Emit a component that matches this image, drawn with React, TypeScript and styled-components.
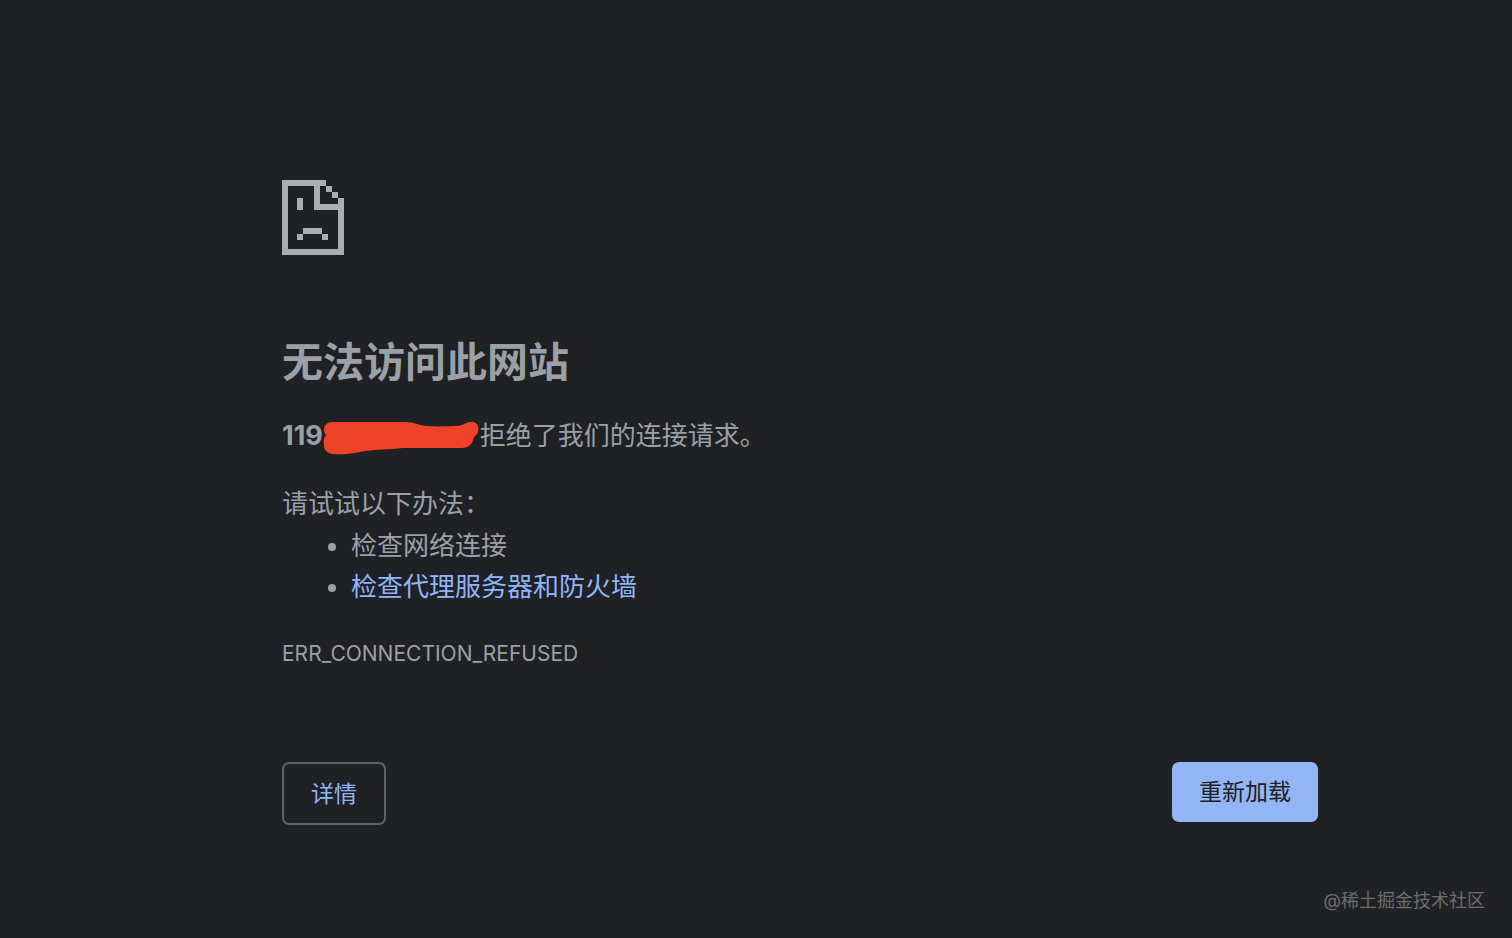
import React from "react";
import styled, { createGlobalStyle } from "styled-components";

const GlobalStyle = createGlobalStyle`
  *, *::before, *::after {
    box-sizing: border-box;
  }
  body {
    margin: 0;
    background: #202124;
    color: #9aa0a6;
    font-family: Inter, "Noto Sans CJK SC", sans-serif;
    font-size: 26px;
    line-height: 42px;
  }
`;

const Page = styled.div`
  display: flex;
  flex-direction: column;
  min-height: 100vh;
`;

const Main = styled.main`
  padding: 180px 194px 0 282px;
`;

const ErrorIcon = styled.svg`
  display: block;
  width: 62px;
  height: 75px;
  fill: #acadae;
`;

const Title = styled.h1`
  margin: 80px 0 26px;
  font-size: 41px;
  font-weight: 700;
  line-height: 54px;
`;

const Paragraph = styled.p`
  margin: 0;
`;

const Summary = styled(Paragraph)`
  display: flex;
  align-items: center;
  margin-bottom: 26px;
`;

const Host = styled.strong`
  font-size: 27px;
  font-weight: 700;
`;

const Redaction = styled.svg`
  flex: none;
  width: 156px;
  height: 34px;
  margin: 4px 1px 0 0;
  fill: #ee4228;
`;

const Suggestions = styled.ul`
  margin: 0;
  padding: 0 0 0 69px;
  line-height: 41px;
`;

const Link = styled.a`
  color: #8fb6f8;
  text-decoration: none;
`;

const ErrorCode = styled.p`
  margin: 26px 0 0;
  font-size: 21px;
`;

const Actions = styled.div`
  display: flex;
  justify-content: space-between;
  align-items: flex-start;
  margin-top: 87px;
`;

const Button = styled.button<{ $primary?: boolean }>`
  height: ${(p) => (p.$primary ? 60 : 63)}px;
  padding: 0 27px;
  border: ${(p) => (p.$primary ? "0" : "2px solid #5f6368")};
  border-radius: 7px;
  background: ${(p) => (p.$primary ? "#92b5f3" : "transparent")};
  color: ${(p) => (p.$primary ? "#202124" : "#8fb6f8")};
  font-family: inherit;
  font-size: 23px;
  line-height: 34px;
  cursor: pointer;
`;

const Footer = styled.footer`
  margin-top: auto;
  padding: 24px 27px 23px;
  color: #6c6d6f;
  font-size: 18px;
  line-height: 28px;
  text-align: right;
`;

export default function App() {
  return (
    <Page>
      <GlobalStyle />
      <Main>
        <ErrorIcon viewBox="0 0 62 75" shapeRendering="crispEdges" aria-hidden="true">
          <path
            fillRule="evenodd"
            d="M0 0H44V6H50V12H56V18H62V75H0ZM6 6V69H56V30H32V6ZM38 6V24H56V18H50V12H44V6Z"
          />
          <path d="M15 18H21V30H15ZM21 48H40V54H46V60H40V54H21V60H15V54H21Z" />
        </ErrorIcon>
        <Title>无法访问此网站</Title>
        <Summary>
          <Host>119</Host>
          <Redaction viewBox="0 0 156 34" aria-hidden="true">
            <path d="M8 1H82C91 1 95 4 103 5C117 6 128 5 134 5C142 4 145 0 151 1C156 3 157 10 153 14C149 17 151 21 147 24C144 27 140 27 135 27H80C65 29 54 28 43 30C31 32 23 34 9 33C4 32 1 29 1 24C0 20 1 17 3 14C-1 9 1 2 8 1Z" />
          </Redaction>
          <span>拒绝了我们的连接请求。</span>
        </Summary>
        <Paragraph>请试试以下办法：</Paragraph>
        <Suggestions>
          <li>检查网络连接</li>
          <li>
            <Link href="#proxy">检查代理服务器和防火墙</Link>
          </li>
        </Suggestions>
        <ErrorCode>ERR_CONNECTION_REFUSED</ErrorCode>
        <Actions>
          <Button type="button">详情</Button>
          <Button type="button" $primary>
            重新加载
          </Button>
        </Actions>
      </Main>
      <Footer>@稀土掘金技术社区</Footer>
    </Page>
  );
}
